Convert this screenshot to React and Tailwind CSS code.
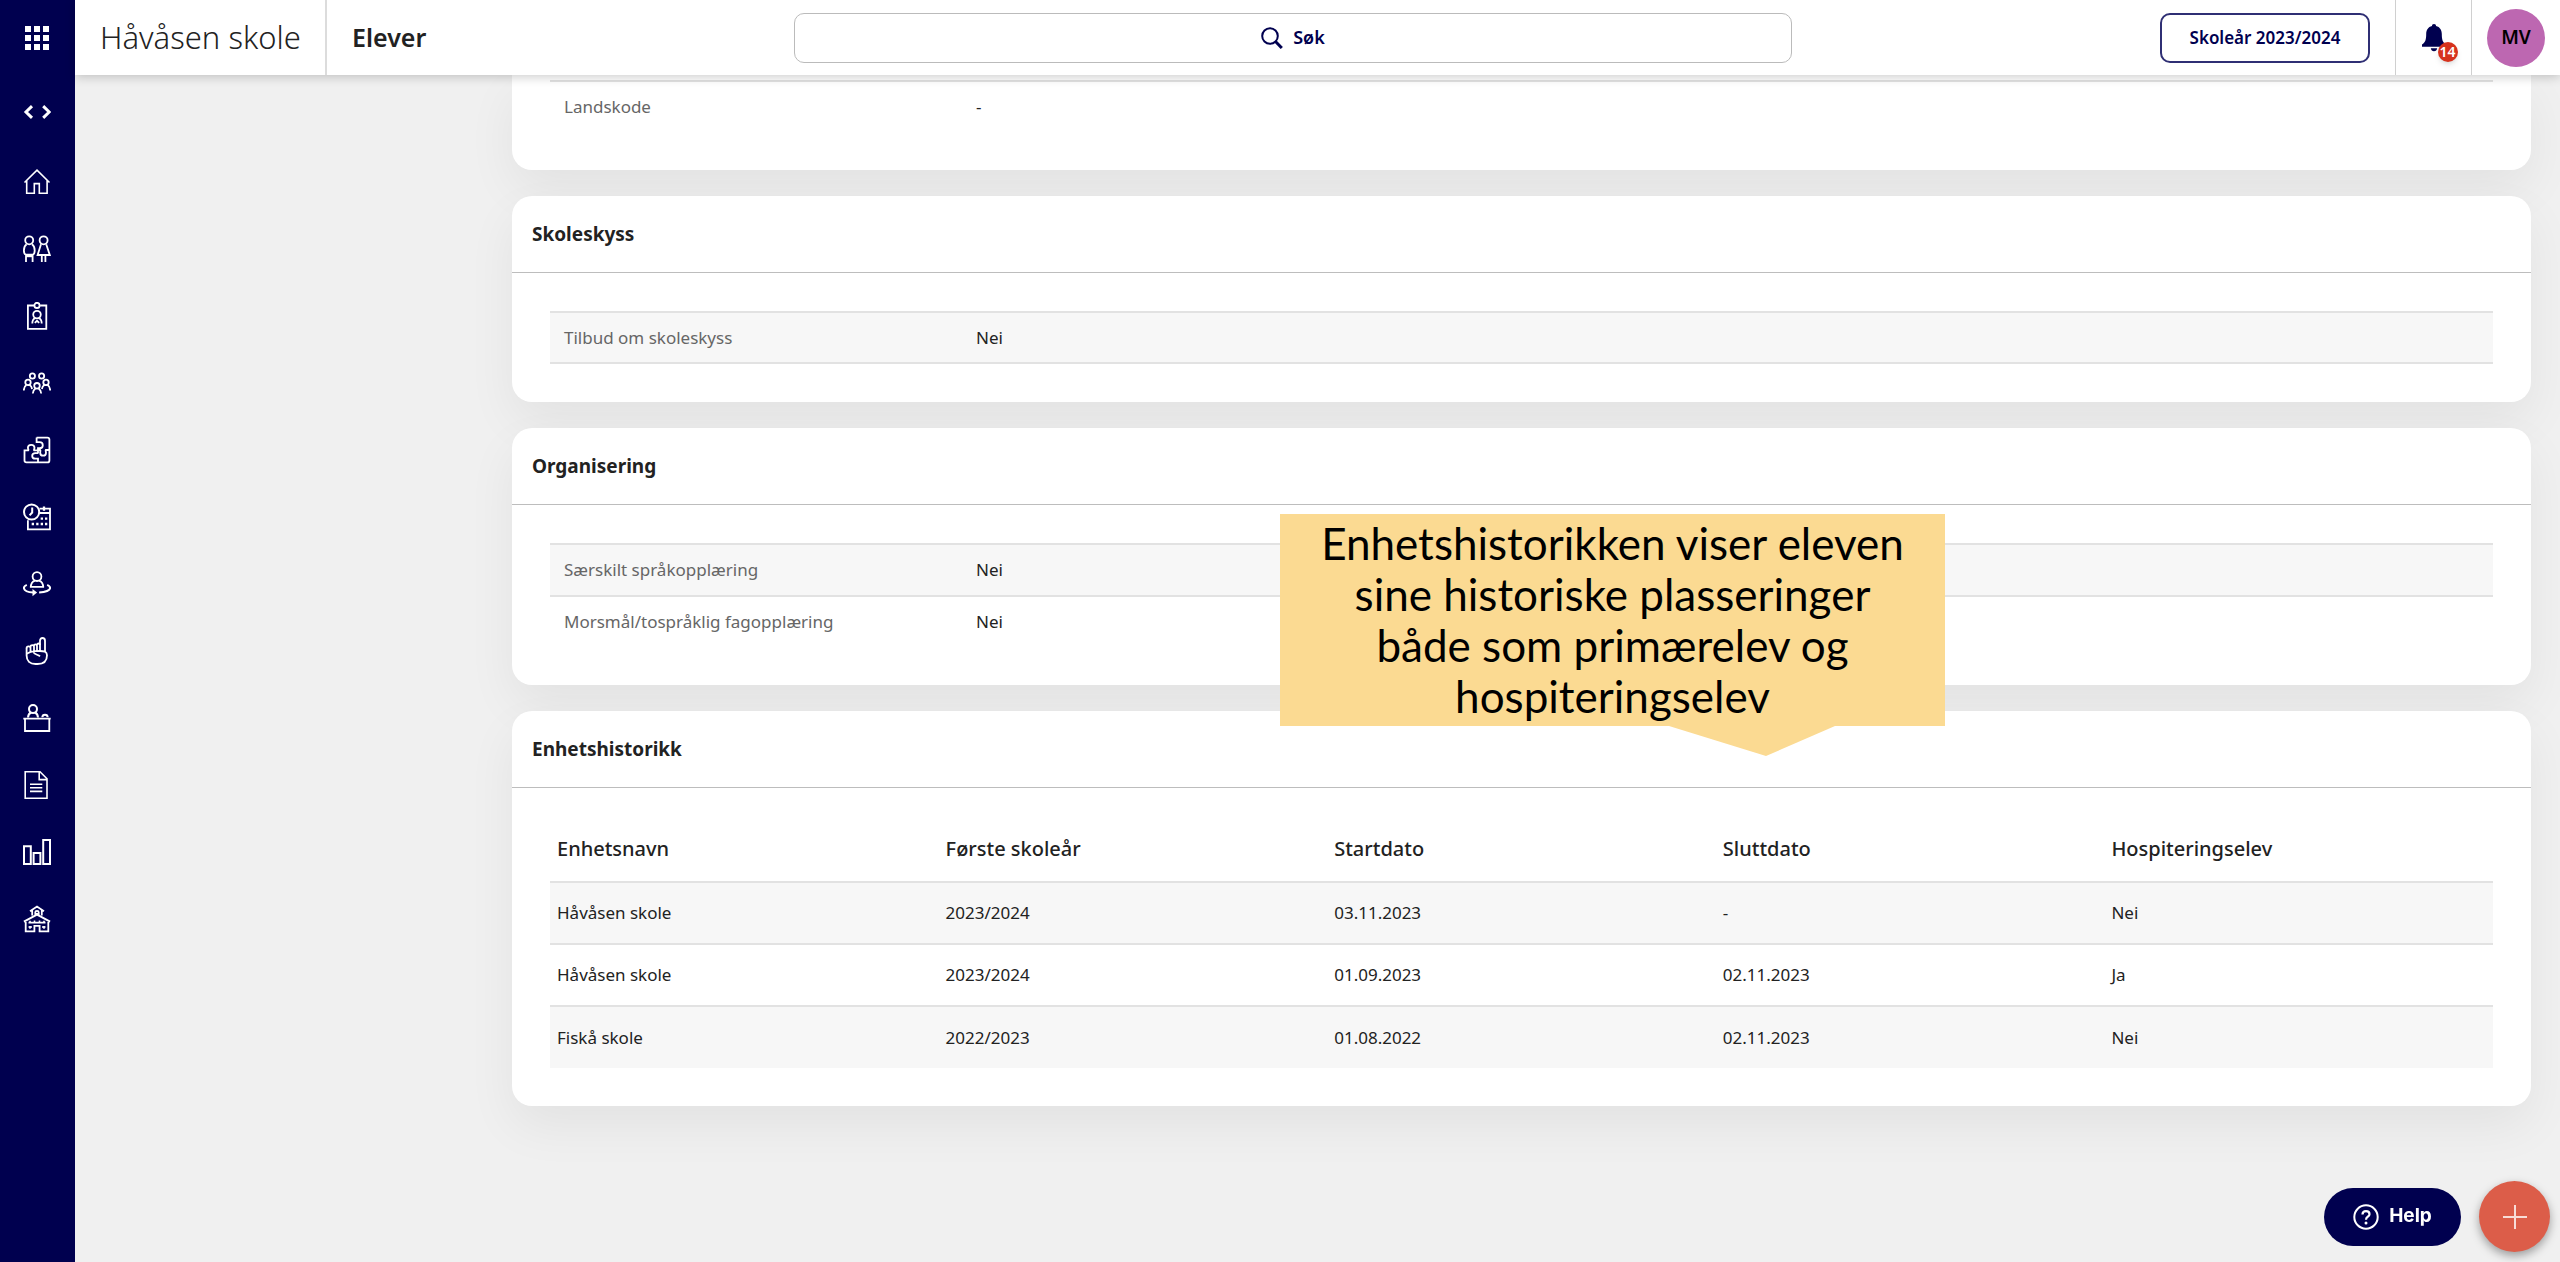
import React from 'react';
import clsx from 'clsx';

const stroke = {
  fill: 'none',
  stroke: 'currentColor',
  strokeWidth: 1.8,
};

const NavIcon = ({ children }) => (
  <svg viewBox="0 0 28 28" className="h-7 w-7" aria-hidden="true" {...stroke}>
    {children}
  </svg>
);

const navItems = [
  {
    label: 'Hjem',
    icon: (
      <NavIcon>
        <path d="M1.5 14.5 14 2.2l12.500 12.300M3.700 12.600v12.600h7.600v-9.600h5v9.600h7.800V12.600" strokeWidth="1.6" />
      </NavIcon>
    ),
  },
  {
    label: 'Elever',
    icon: (
      <NavIcon>
        <circle cx="6.200" cy="5.300" r="4" />
        <circle cx="20.600" cy="5.300" r="4" />
        <path d="M3.600 9.300c-1.800 1.200-2.700 3.800-2.700 6.200 0 2.200.7 3.600 1.900 4.200h7c1.200-.6 1.900-2 1.900-4.200 0-2.400-.9-5-2.700-6.200M3 20v7M9.600 20v7" />
        <path d="M3 20.800h7" strokeWidth="2.800" />
        <path d="M18 9.300 14.600 20h12.200L23.200 9.300M18.800 20v7M22.400 20v7" />
      </NavIcon>
    ),
  },
  {
    label: 'Ansatte',
    icon: (
      <NavIcon>
        <path d="M11 3.500H4.900v23.300h18.400V3.500h-6.200" />
        <circle cx="14" cy="3.400" r="2.600" />
        <circle cx="14" cy="12.600" r="3.800" />
        <path d="M9.300 21.600c0-3 1.200-4.800 3-5.400M18.700 21.600c0-3-1.200-4.800-3-5.400M11.800 20.800 14 18.800l2.200 2" />
      </NavIcon>
    ),
  },
  {
    label: 'Grupper',
    icon: (
      <NavIcon>
        <circle cx="9.400" cy="7" r="2.600" />
        <circle cx="18.600" cy="7" r="2.600" />
        <circle cx="5" cy="13.400" r="2.700" />
        <circle cx="23" cy="13.400" r="2.700" />
        <circle cx="14" cy="16.800" r="2.800" />
        <path d="M.8 21.500c.1-2.800 1-4.500 2.600-5.500M6.600 16c1.400.7 2.200 2 2.500 4M27.200 21.500c-.1-2.800-1-4.500-2.600-5.500M21.400 16c-1.400.7-2.200 2-2.500 4M9.800 24.500c.2-2.400 1.100-4 2.600-5M18.200 24.500c-.2-2.400-1.100-4-2.600-5" />
      </NavIcon>
    ),
  },
  {
    label: 'Fag',
    icon: (
      <NavIcon>
        <path d="M13.600 1.600h10.800c1.300 0 2 .7 2 2v20.800c0 1.300-.7 2-2 2H3.500c-1.300 0-2-.7-2-2V14.400h3.800c.6-.6-.4-1.400-.4-2.600 0-1.700 1.400-2.900 3.300-2.900s3.300 1.200 3.300 2.900c0 1.200-1 2-.4 2.600H15v3" />
        <path d="M13.600 1.600v4.600h3c1.900 0 3.200 1.200 3.200 3s-1.300 3-3.200 3h-1.600v2.400M15 26.400v-3.800h-2.600c-2 0-3.200-1.100-3.200-2.700s1.200-2.700 3.200-2.700H15" />
        <path d="M26.400 14h-3.600c-.6.600.2 1.400.2 2.700 0 1.800-1.200 3-2.900 3s-2.900-1.200-2.900-3c0-1.300.6-2.100 0-2.700H15" />
      </NavIcon>
    ),
  },
  {
    label: 'Timeplan',
    icon: (
      <NavIcon>
        <circle cx="8.600" cy="9" r="7.600" strokeWidth="2" />
        <path d="M9.200 4.600v4.900L6.600 12.400" strokeWidth="2" />
        <path d="M16.500 5.700H27v20.600H4.900v-9M16.500 10H27" />
        <path d="M21 3.500v4.300M17.700 15.600H20M22 15.600h2.300M8.700 21H11M13.200 21h2.300M17.700 21H20M22 21h2.300" strokeWidth="2.300" />
      </NavIcon>
    ),
  },
  {
    label: 'Oppfølging',
    icon: (
      <NavIcon>
        <circle cx="14" cy="6.600" r="4.400" />
        <path d="M7.800 17.400c0-3.800 1.700-6 4.200-6.800M20.200 17.400c0-3.800-1.700-6-4.200-6.800M6.900 16.800h14.200" />
        <path d="M3.800 14.800c-1.900.9-2.900 1.900-2.900 3.100 0 2.400 4 4.200 9.500 4.700M24.200 14.800c1.900.9 2.900 1.900 2.900 3.100 0 2.400-4.500 4.300-11 4.700" strokeWidth="2" />
        <path d="M9.500 19v7.200l4.600-3.600z" fill="currentColor" stroke="none" />
      </NavIcon>
    ),
  },
  {
    label: 'Fravær',
    icon: (
      <NavIcon>
        <path d="M17 14V3.800C17 2 18.100 1 19.500 1S22 2 22 3.800v10.700c1.400.9 2 2 2 3.700 0 5.700-3.600 8.800-9.500 8.800h-2C7 27 3.600 24 3.600 18.500V11" />
        <path d="M3.600 11.200c0-2.400 3.900-2.400 3.900 0v4M7.500 11V9.800c0-2.300 3.500-2.300 3.500 0v4.600M11 9c0-2.300 3-2.300 3 0v4.800M14 8c0-2 3-2 3 0M3.600 16.800c2.700-1.600 5.400-2.500 8.100-2.600L17 14l5 .5M10.500 15.400c1.500 2.600 4.500 2 6.500 4" />
      </NavIcon>
    ),
  },
  {
    label: 'Undervisning',
    icon: (
      <NavIcon>
        <circle cx="10" cy="5.100" r="4" strokeWidth="2" />
        <path d="M5 13.500c.2-2.700 1.300-4.300 3.200-5M15 13.500c-.2-2.700-1.300-4.300-3.200-5M19.300 13.200c.2-3.300 5.200-3.300 5.400 0" strokeWidth="2" />
        <path d="M.3 14.600h27.400M2 14.600v12.400h24.300V14.600" />
      </NavIcon>
    ),
  },
  {
    label: 'Dokumenter',
    icon: (
      <NavIcon>
        <path d="M2.200.8h14.800l7 7v19.400H2.200zM16.200.8v7.800H24" strokeWidth="1.6" />
        <path d="M7 13.200h12.300M7 16.800h12.300M7 20.400h12.300" strokeWidth="1.6" />
      </NavIcon>
    ),
  },
  {
    label: 'Rapporter',
    icon: (
      <NavIcon>
        <path d="M1 8.300h6.800V26H1zM10.600 15h6.800v11h-6.800zM20.200 2h6.800v24h-6.800z" strokeWidth="2" />
      </NavIcon>
    ),
  },
  {
    label: 'Skole',
    icon: (
      <NavIcon>
        <path d="M7 6.200 14 1.500l7 4.700M9.200 5.200v5.400M18.800 5.200v5.400M12.300 9V7.200c0-1.800 3.400-1.800 3.400 0V9zM.9 16.600l13.100-7 13.100 7M2.700 15.600v10.800h8.700v-5.600h5.200v5.600h8.700V15.600" />
        <path d="M7 15.800v2.800M11.500 15.400v3.200M16.500 15.400v3.200M21 15.800v2.800M7 21v2.800M21 21v2.800M5.500 17.600h17M5.500 22h3.500M19 22h3.500" strokeWidth="1.600" />
      </NavIcon>
    ),
  },
];

const history = [
  { unit: 'Håvåsen skole', year: '2023/2024', start: '03.11.2023', end: '-', visiting: 'Nei' },
  { unit: 'Håvåsen skole', year: '2023/2024', start: '01.09.2023', end: '02.11.2023', visiting: 'Ja' },
  { unit: 'Fiskå skole', year: '2022/2023', start: '01.08.2022', end: '02.11.2023', visiting: 'Nei' },
];

const columns = ['Enhetsnavn', 'Første skoleår', 'Startdato', 'Sluttdato', 'Hospiteringselev'];

const Sidebar = () => (
  <nav className="flex w-[75px] shrink-0 flex-col bg-[#00004f] pr-px text-white" aria-label="Hovedmeny">
    <button className="flex h-[75px] items-center justify-center" aria-label="Apper">
      <svg viewBox="0 0 24 24" className="h-6 w-6" fill="currentColor" aria-hidden="true">
        {[0, 9, 18].map((y) =>
          [0, 9, 18].map((x) => <rect key={`${x}-${y}`} x={x} y={y} width="6" height="6" />)
        )}
      </svg>
    </button>
    <button className="flex h-[73px] items-center justify-center" aria-label="Utvid meny">
      <svg viewBox="0 0 28 14" className="h-3.5 w-7" fill="none" stroke="currentColor" strokeWidth="3" aria-hidden="true">
        <path d="M9 1.200 3 7l6 5.800M20.200 1.200l6 5.800-6 5.800" />
      </svg>
    </button>
    {navItems.map((item) => (
      <a key={item.label} href="#" aria-label={item.label} className="flex h-[67px] items-center justify-center">
        {item.icon}
      </a>
    ))}
  </nav>
);

const Header = () => (
  <header className="relative z-10 flex h-[75px] items-center bg-white shadow-[0_2px_10px_rgba(0,0,0,0.2)]">
    <div className="flex h-full w-[252px] shrink-0 items-center border-r-2 border-[#dcdcdc] pl-[25px] text-[31px] font-light whitespace-nowrap">
      Håvåsen skole
    </div>
    <h1 className="w-[467px] shrink-0 pl-[25px] text-[25px] font-semibold">Elever</h1>
    <button className="mr-[368px] flex h-[50px] flex-1 items-center justify-center gap-2.5 rounded-[10px] border border-[#bbb] text-[18px] font-semibold text-[#00004f]">
      <svg viewBox="0 0 22 22" className="h-[22px] w-[22px]" fill="none" stroke="currentColor" aria-hidden="true">
        <circle cx="9" cy="9" r="7.800" strokeWidth="2" />
        <path d="m14.500 14.500 6.300 6.500" strokeWidth="3" />
      </svg>
      Søk
    </button>
    <button className="h-[50px] w-[210px] shrink-0 rounded-[10px] border-2 border-[#2f2f74] text-[17px] font-semibold text-[#00004f]">
      Skoleår 2023/2024
    </button>
    <button className="ml-[25px] flex h-full w-[77px] shrink-0 items-center justify-center border-x border-[#d0d0d0]" aria-label="Varsler">
      <span className="relative">
        <svg viewBox="0 0 24 28" className="h-7 w-6 text-[#00004f]" fill="currentColor" aria-hidden="true">
          <path d="M12 0c1.300 0 2 .7 2 1.900 4 1 5.800 4 5.800 8.100 0 6 .9 8.200 4.200 10.500v2.200H0v-2.200C3.300 18.200 4.200 16 4.200 10c0-4.100 1.800-7.100 5.800-8.100C10 .7 10.700 0 12 0zM8.800 24.300h6.400c-.3 2-1.500 3-3.200 3s-2.900-1-3.200-3z" />
        </svg>
        <span className="absolute top-[18px] left-4 flex h-5 w-5 items-center justify-center rounded-full bg-[#d6321d] text-[14px] font-semibold text-white shadow-md">
          14
        </span>
      </span>
    </button>
    <button className="mr-[15px] ml-[15px] h-[58px] w-[58px] shrink-0 rounded-full bg-[#bd67b1] text-[19px] font-semibold text-black">
      MV
    </button>
  </header>
);

const Card = ({ title, children }) => (
  <section className="rounded-[20px] bg-white shadow-[0_20px_50px_rgba(0,0,0,0.06)]">
    <h2 className="flex h-[77px] items-center border-b border-[#bdbdbd] px-5 text-[19px] font-bold">{title}</h2>
    <div className="px-[38px] py-[38px]">{children}</div>
  </section>
);

const InfoRow = ({ label, value, className }) => (
  <div className={clsx('grid grid-cols-[412px_1fr] items-center border-[#e2e2e2] px-3.5 text-[17px]', className)}>
    <dt className="text-[#666]">{label}</dt>
    <dd>{value}</dd>
  </div>
);

const HistoryTable = () => (
  <table className="w-full table-fixed text-left">
    <thead>
      <tr className="h-[56px]">
        {columns.map((column) => (
          <th key={column} className="px-[7px] pb-2.5 text-[20px] font-medium">
            {column}
          </th>
        ))}
      </tr>
    </thead>
    <tbody className="text-[17px]">
      {history.map((row) => (
        <tr key={row.start} className="h-[62px] border-t-2 border-[#e2e2e2] odd:bg-[#f7f7f7]">
          <td className="px-[7px]">{row.unit}</td>
          <td className="px-[7px]">{row.year}</td>
          <td className="px-[7px]">{row.start}</td>
          <td className="px-[7px]">{row.end}</td>
          <td className="px-[7px]">{row.visiting}</td>
        </tr>
      ))}
    </tbody>
  </table>
);

const Callout = () => (
  <div className="absolute top-[439px] left-[768px] w-[665px]">
    <p className="bg-[#fbda92] px-8 py-1 text-center font-['Lato',sans-serif] text-[44px] leading-[51px] text-black">
      Enhetshistorikken viser eleven sine historiske plasseringer både som primærelev og hospiteringselev
    </p>
    <svg viewBox="0 0 166 30" className="ml-[389px] h-[30px] w-[166px]" aria-hidden="true">
      <path d="M0 0h166L97 30z" fill="#fbda92" />
    </svg>
  </div>
);

const App = () => (
  <div className="flex min-h-screen bg-[#f0f0f0] font-['Noto_Sans',sans-serif] text-[#222]">
    <Sidebar />
    <div className="flex min-w-0 flex-1 flex-col">
      <Header />
      <main className="relative mr-[29px] ml-[437px] flex flex-col gap-[26px]">
        <section className="rounded-b-[20px] bg-white px-[38px] pt-[5px] pb-[38px] shadow-[0_20px_50px_rgba(0,0,0,0.06)]">
          <dl>
            <InfoRow label="Landskode" value="-" className="h-[52px] border-t-2" />
          </dl>
        </section>

        <Card title="Skoleskyss">
          <dl>
            <InfoRow label="Tilbud om skoleskyss" value="Nei" className="h-[53px] border-y-2 bg-[#f7f7f7]" />
          </dl>
        </Card>

        <Card title="Organisering">
          <dl>
            <InfoRow label="Særskilt språkopplæring" value="Nei" className="h-[52px] border-t-2 bg-[#f7f7f7]" />
            <InfoRow label="Morsmål/tospråklig fagopplæring" value="Nei" className="h-[52px] border-t-2" />
          </dl>
        </Card>

        <Card title="Enhetshistorikk">
          <HistoryTable />
        </Card>

        <Callout />
      </main>
    </div>

    <div className="fixed right-2.5 bottom-2.5 flex items-center gap-[18px]">
      <button className="flex h-[58px] w-[137px] items-center justify-center gap-2.5 rounded-full bg-[#00004f] font-['Inter',sans-serif] text-[19px] font-bold text-white">
        <svg viewBox="0 0 26 26" className="h-[26px] w-[26px]" fill="none" stroke="currentColor" strokeWidth="2" aria-hidden="true">
          <circle cx="13" cy="13" r="11.700" />
          <path d="M9.500 10.600c0-2.200 1.500-3.500 3.500-3.500s3.500 1.300 3.500 3.100c0 2.500-3.500 2.600-3.500 5.500" strokeWidth="2.200" />
          <circle cx="13" cy="18.900" r="1.500" fill="currentColor" stroke="none" />
        </svg>
        Help
      </button>
      <button className="flex h-[71px] w-[71px] items-center justify-center rounded-full bg-[#dc5d49] text-white shadow-[0_4px_10px_rgba(0,0,0,0.35)]" aria-label="Legg til">
        <svg viewBox="0 0 24 24" className="h-6 w-6" fill="none" stroke="#f8dcd7" strokeWidth="2" aria-hidden="true">
          <path d="M12 0v24M0 12h24" />
        </svg>
      </button>
    </div>
  </div>
);

export default App;
